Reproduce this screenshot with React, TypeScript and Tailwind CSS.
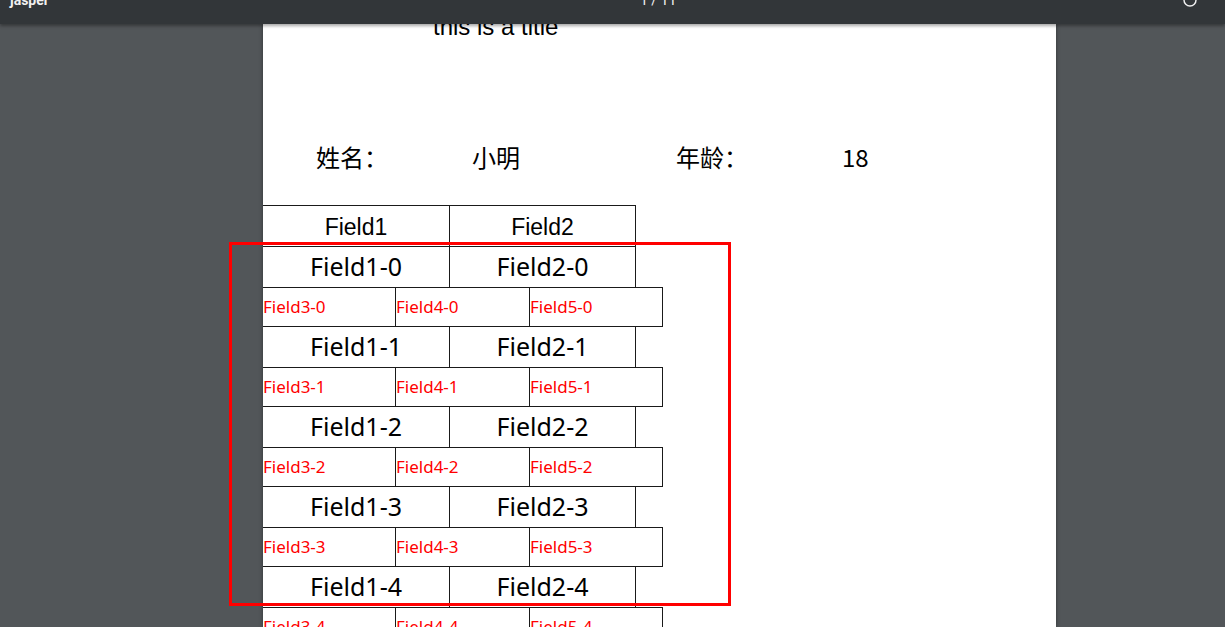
import { RotateCw } from "lucide-react";

const rows = [0, 1, 2, 3, 4, 5];

const MainRow = ({ i }: { i: number }) => (
  <div className="flex h-[40px] text-[25px] text-black">
    <div className="flex w-[187px] items-center justify-center border-r border-[#1a1a1a]">Field1-{i}</div>
    <div className="flex w-[186px] items-center justify-center border-r border-[#1a1a1a]">Field2-{i}</div>
  </div>
);

const SubRow = ({ i }: { i: number }) => (
  <div className="flex h-[40px] w-[400px] border-y border-[#1a1a1a] text-[17px] text-[#ff0000]">
    <div className="flex w-[133px] items-center border-r border-[#1a1a1a]">Field3-{i}</div>
    <div className="flex w-[134px] items-center border-r border-[#1a1a1a]">Field4-{i}</div>
    <div className="flex w-[133px] items-center border-r border-[#1a1a1a]">Field5-{i}</div>
  </div>
);

export default function App() {
  return (
    <div className="relative flex h-[627px] w-[1225px] flex-col overflow-hidden bg-[#525659]">
      {/* toolbar, scrolled so only its lower edge shows */}
      <div className="relative z-10 h-[24px] shrink-0 overflow-hidden bg-[#323639] shadow-[0_2px_3px_rgba(0,0,0,0.35)]">
        <div className="-mt-[24px] flex h-[48px] items-center font-['Roboto',sans-serif] text-[14px] text-[#f1f1f1]">
          <div className="w-[640px] pl-[10px] font-bold">jasper</div>
          <div className="w-[542px]">1 / 11</div>
          <RotateCw className="h-[16px] w-[16px]" strokeWidth={2.2} />
        </div>
      </div>

      <div className="flex flex-1 overflow-hidden pl-[263px]">
        <div className="w-[793px] shrink-0 bg-white shadow-[0_0_4px_rgba(0,0,0,0.4)]">
          <div className="-mt-[11px] h-[28px] pl-[170px] font-['Liberation_Sans',sans-serif] text-[24px] leading-[28px] text-black">
            this is a title
          </div>

          <div className="mt-[100px] flex h-[32px] pl-[53px] font-['Noto_Sans_CJK_SC',sans-serif] text-[24px] leading-[32px] text-black">
            <div className="w-[156px]">姓名：</div>
            <div className="w-[204px]">小明</div>
            <div className="w-[166px]">年龄：</div>
            <div>18</div>
          </div>

          <div className="mt-[32px] font-['Noto_Sans',sans-serif]">
            <div className="flex h-[42px] w-[373px] border-y border-[#1a1a1a] font-['Liberation_Sans',sans-serif] text-[23px] text-black">
              <div className="flex w-[187px] items-center justify-center border-r border-[#1a1a1a] pt-[3px]">Field1</div>
              <div className="flex w-[186px] items-center justify-center border-r border-[#1a1a1a] pt-[3px]">Field2</div>
            </div>
            {rows.map((i) => (
              <div key={i}>
                <MainRow i={i} />
                <SubRow i={i} />
              </div>
            ))}
          </div>
        </div>
      </div>

      {/* red highlight frame drawn over the page */}
      <div className="absolute left-[229px] top-[242px] h-[364px] w-[502px] border-[3px] border-[#ff0000]" />
    </div>
  );
}
